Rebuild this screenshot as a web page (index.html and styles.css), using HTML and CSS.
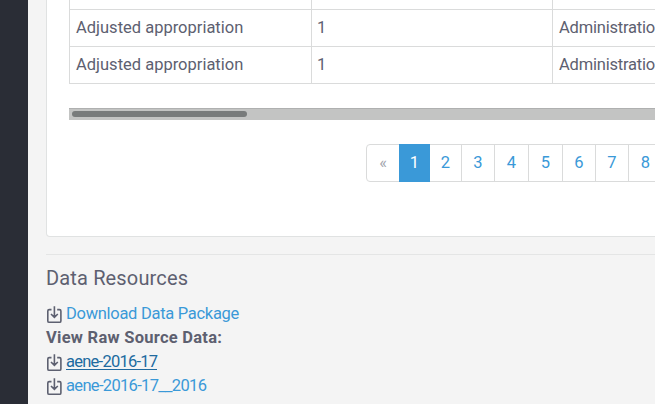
FILE: index.html
```html
<!DOCTYPE html>
<html lang="en">
<head>
<meta charset="utf-8">
<title>Data Resources</title>
<link rel="stylesheet" href="styles.css">
</head>
<body>
<svg class="defs" aria-hidden="true"><symbol id="download" viewBox="0 0 16 18">
<path d="M5.5 3.6H3.2Q1.8 3.6 1.8 5V14.9Q1.8 16.3 3.2 16.3H13.5Q14.9 16.3 14.9 14.9V5Q14.9 3.6 13.5 3.6H11.2M8.4 .3V11M5 8L8.4 11.3L11.8 8" fill="none" stroke="currentColor" stroke-width="1.6"/>
</symbol></svg>
<div class="app">
<aside class="sidebar"></aside>
<main class="content">
<section class="panel">
<div class="table">
<div class="row stub"><div></div><div></div><div></div></div>
<div class="row"><div>Adjusted appropriation</div><div class="num">1</div><div class="adm">Administration</div></div>
<div class="row"><div>Adjusted appropriation</div><div class="num">1</div><div class="adm">Administration</div></div>
</div>
<div class="scrollbar"><div class="thumb"></div></div>
<nav class="pagination">
<a class="prev">«</a><a class="active">1</a><a class="p2">2</a><a class="p3">3</a><a class="p4">4</a><a class="p5">5</a><a class="p6">6</a><a class="p7">7</a><a class="p8">8</a>
</nav>
</section>
<section class="resources">
<h2>Data Resources</h2>
<div class="line"><svg><use href="#download"/></svg><a class="pkg">Download Data Package</a></div>
<div class="line"><strong>View Raw Source Data:</strong></div>
<div class="line"><svg><use href="#download"/></svg><a class="hover">aene-2016-17</a></div>
<div class="line"><svg><use href="#download"/></svg><a class="last">aene-2016-17__2016</a></div>
</section>
</main>
</div>
</body>
</html>
```
FILE: styles.css
```css
* { box-sizing: border-box; }
body { margin: 0; background: #f4f4f4; color: #5d6070; font: 16.5px/24px Roboto, "Noto Sans", sans-serif; overflow: hidden; }
.defs { display: none; }
.app { display: flex; width: 655px; height: 404px; overflow: hidden; }
.sidebar { flex: 0 0 28px; background: #2a2d36; }
.content { flex: 0 0 627px; padding-left: 18px; overflow: hidden; }
.panel { width: 640px; height: 237px; padding-left: 22px; background: #fff; border: 1px solid #e0e2e2; border-top: 0; border-radius: 0 0 4px 4px; overflow: hidden; }
.table { width: 725px; border-left: 1px solid #dadbdb; }
.row { display: grid; grid-template-columns: 242px 241px 241px; height: 37px; border-bottom: 1px solid #dadbdb; line-height: 36px; white-space: nowrap; }
.row.stub { height: 10px; }
.row > div { padding-left: 6px; border-right: 1px solid #dadbdb; }
.row > .num { padding-left: 5px; }
.adm { letter-spacing: -.2px; }
.scrollbar { height: 12px; margin-top: 24px; padding: 2px 3px; background: #c3c4c3; border-top: 1px solid #afb0b0; }
.thumb { width: 175px; height: 6px; border-radius: 3px; background: #787b7b; }
.pagination { display: flex; width: 360px; height: 38px; margin: 24px 0 0 297px; border: 1px solid #dadbdb; border-radius: 4px; color: #3a99d8; line-height: 36px; text-align: center; }
.pagination a { flex: 0 0 34px; border-right: 1px solid #dadbdb; }
.pagination .prev { flex-basis: 32px; border: 0; color: #a2a4ad; }
.pagination .active { flex-basis: 31px; height: 38px; margin-top: -1px; padding-top: 1px; border: 0; background: #3a99d8; color: #fff; }
.pagination .p2 { flex-basis: 32px; }
.pagination .p3, .pagination .p6, .pagination .p7 { flex-basis: 33px; }
.resources { width: 640px; margin-top: 17px; border-top: 1px solid #e4e5e5; }
h2 { margin: 10px 0; height: 27px; font-size: 20px; font-weight: 400; line-height: 27px; letter-spacing: .15px; }
.line { display: flex; height: 24px; white-space: nowrap; }
.line svg { flex: 0 0 16px; width: 16px; height: 18px; margin: 4px 4px 0 0; }
.line a { color: #3a99d8; }
.line strong { letter-spacing: .26px; }
.line .pkg { letter-spacing: -.29px; }
.line .last { letter-spacing: -.67px; }
.line .hover { height: 20px; color: #206a9f; border-bottom: 1px solid #206a9f; letter-spacing: -.75px; }
```
